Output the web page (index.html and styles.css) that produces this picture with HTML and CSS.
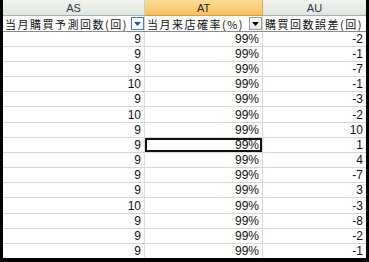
FILE: index.html
```html
<!DOCTYPE html>
<html lang="ja">
<head>
<meta charset="utf-8">
<link rel="stylesheet" href="styles.css">
</head>
<body>
<div class="sheet">
  <div class="row colhead">
    <div class="ch">AS</div>
    <div class="ch sel">AT</div>
    <div class="ch">AU</div>
  </div>
  <div class="row head">
    <div class="hc"><span class="lbl">当月購買予測回数(回)</span><span class="fbtn active"><svg width="7" height="4" viewBox="0 0 7 4"><path d="M0 0H7L3.5 4Z"/></svg></span></div>
    <div class="hc"><span class="lbl">当月来店確率(%)</span><span class="fbtn"><svg width="7" height="4" viewBox="0 0 7 4"><path d="M0 0H7L3.5 4Z"/></svg></span></div>
    <div class="hc"><span class="lbl">購買回数誤差(回)</span></div>
  </div>
  <div class="data">
    <div class="row"><div class="c">9</div><div class="c">99%</div><div class="c">-2</div></div>
    <div class="row"><div class="c">9</div><div class="c">99%</div><div class="c">-1</div></div>
    <div class="row"><div class="c">9</div><div class="c">99%</div><div class="c">-7</div></div>
    <div class="row"><div class="c">10</div><div class="c">99%</div><div class="c">-1</div></div>
    <div class="row"><div class="c">9</div><div class="c">99%</div><div class="c">-3</div></div>
    <div class="row"><div class="c">10</div><div class="c">99%</div><div class="c">-2</div></div>
    <div class="row"><div class="c">9</div><div class="c">99%</div><div class="c">10</div></div>
    <div class="row"><div class="c">9</div><div class="c active">99%</div><div class="c">1</div></div>
    <div class="row"><div class="c">9</div><div class="c">99%</div><div class="c">4</div></div>
    <div class="row"><div class="c">9</div><div class="c">99%</div><div class="c">-7</div></div>
    <div class="row"><div class="c">9</div><div class="c">99%</div><div class="c">3</div></div>
    <div class="row"><div class="c">10</div><div class="c">99%</div><div class="c">-3</div></div>
    <div class="row"><div class="c">9</div><div class="c">99%</div><div class="c">-8</div></div>
    <div class="row"><div class="c">9</div><div class="c">99%</div><div class="c">-2</div></div>
    <div class="row"><div class="c">9</div><div class="c">99%</div><div class="c">-1</div></div>
  </div>
</div>
</body>
</html>
```
FILE: styles.css
```css
html, body {
  margin: 0;
  padding: 0;
  background: #fff;
}
.sheet {
  width: 369px;
  height: 262px;
  box-sizing: border-box;
  border-left: 3px solid #000;
  border-right: 3px solid #000;
  border-bottom: 4px solid #000;
  overflow: hidden;
  font-family: "Liberation Sans", Arial, sans-serif;
  font-size: 12px;
  color: #000;
}
.row {
  display: grid;
  grid-template-columns: 142px 118px 103px;
  height: 15px;
  box-sizing: border-box;
}
.colhead {
  height: 16px;
}
.ch {
  display: flex;
  align-items: center;
  justify-content: center;
  background: linear-gradient(#f1f4ef, #e0e6dd);
  border-right: 1px solid #c5cdd6;
  border-bottom: 1px solid #9eb0c0;
  color: #2a3a4e;
  font-size: 11px;
  box-sizing: border-box;
}
.ch.sel {
  background: linear-gradient(#fbdc98, #f6c25c);
  border-right-color: #e0a64a;
  border-bottom-color: #e39b2c;
  color: #2a2a2a;
}
.ch:last-child {
  border-right: none;
}
.head {
  height: 16px;
  border-bottom: 1px solid #8a8a8a;
}
.hc {
  display: flex;
  align-items: center;
  overflow: hidden;
  padding-left: 2px;
  border-right: 1px solid #cfcfcf;
}
.hc:last-child {
  border-right: none;
}
.lbl {
  font-family: "Noto Sans CJK JP", sans-serif;
  font-size: 11px;
  letter-spacing: 1.5px;
  white-space: nowrap;
  flex: 1;
  min-width: 0;
  overflow: hidden;
  line-height: 14px;
  color: #111;
}
.fbtn {
  flex: none;
  width: 13px;
  height: 13px;
  box-sizing: border-box;
  border: 1px solid #9a9a9a;
  background: linear-gradient(#ffffff, #e8e8e8);
  display: flex;
  align-items: center;
  justify-content: center;
}
.fbtn svg {
  fill: #000;
}
.fbtn.active {
  border-color: #4d79c8;
  background: #fff;
}
.fbtn.active svg {
  fill: #1d4fd0;
}
.data .row:nth-child(6),
.data .row:nth-child(12) {
  height: 16px;
}
.c {
  display: flex;
  align-items: center;
  justify-content: flex-end;
  padding-right: 3px;
  border-bottom: 1px solid #d6d6d6;
  border-right: 1px solid #dcdcdc;
  line-height: 14px;
  color: #111;
}
.c:last-child {
  border-right: none;
}
.c.active {
  box-shadow: inset 0 0 0 2px #111;
}
```
